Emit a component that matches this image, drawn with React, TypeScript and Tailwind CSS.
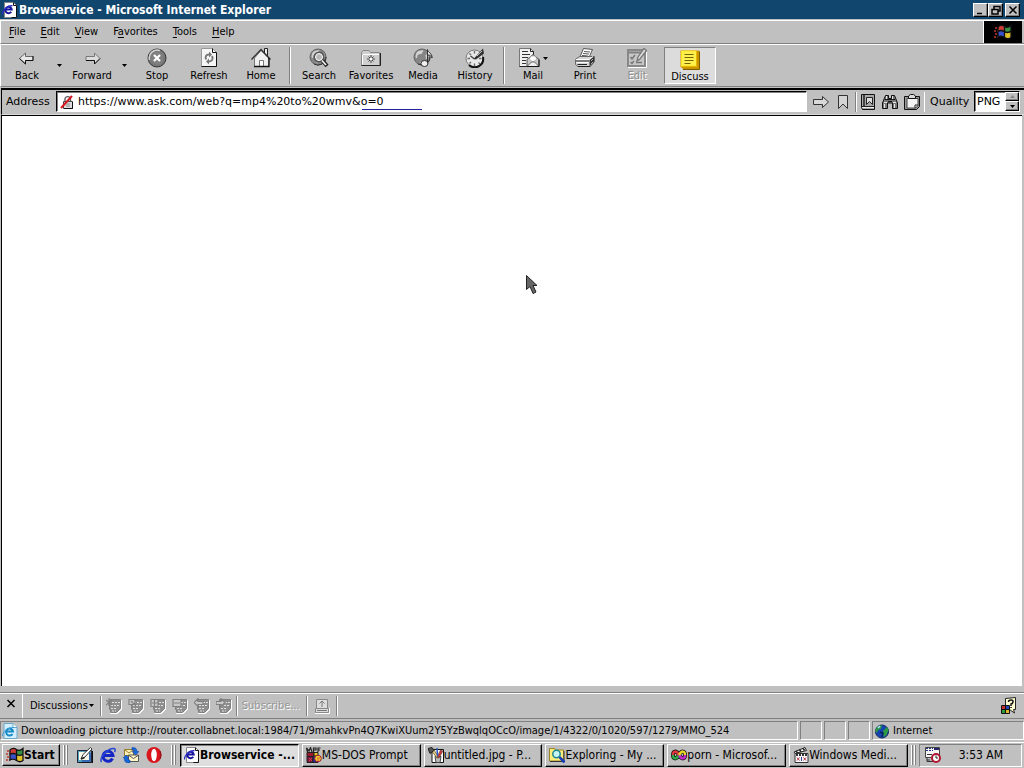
import type { ReactNode } from "react";

function Svg({ w = 16, h = 16, children }: { w?: number; h?: number; children: ReactNode }) {
  return (
    <svg width={w} height={h} viewBox={`0 0 ${w} ${h}`} className="shrink-0" aria-hidden="true">
      {children}
    </svg>
  );
}

/* ---------- icons ---------- */

const IePage = () => (
  <Svg>
    <path d="M2.500.5h9l3 3v12h-12z" fill="#fff" stroke="#888" />
    <path d="M11.500.5v3h3v12h-5" fill="none" stroke="#111" />
    <path d="M9.200 9.800A3.200 3.200 0 1 1 9.700 7.500H4" fill="none" stroke="#15159c" strokeWidth="2" />
    <path d="M.5 12.500C0 9 5 3.500 10.500 3.500" fill="none" stroke="#2929c8" strokeWidth="1.300" />
  </Svg>
);

const BackIcon = () => (
  <Svg w={20} h={20}>
    <path d="M2.500 10.500 8.500 5v3.500h7.500v4H8.500V16z" fill="#e8e8e8" stroke="#666" />
    <path d="m2.500 10.500 6 5.500v-3.500h7.500V8" fill="none" stroke="#111" />
  </Svg>
);

const ForwardIcon = () => (
  <Svg w={20} h={20}>
    <path d="M18 10.500 12.500 5v3.500H4v4h8.500V16z" fill="#dcdcdc" stroke="#777" />
    <path d="M4 12.500h8.500V16l5.500-5.500" fill="none" stroke="#111" />
  </Svg>
);

const StopIcon = () => (
  <Svg w={20} h={20}>
    <circle cx="10" cy="10" r="9" fill="#777" stroke="#333" />
    <path d="M2.500 12A8 8 0 0 1 13 2.500" fill="none" stroke="#d4d4d4" strokeWidth="1.500" />
    <circle cx="10" cy="10" r="6.500" fill="#808080" />
    <path d="m7 7 6 6m0-6-6 6" stroke="#fff" strokeWidth="2.200" />
  </Svg>
);

const RefreshIcon = () => (
  <Svg w={20} h={20}>
    <path d="M2.500.5h11l4 4v14h-15z" fill="#f6f6f6" stroke="#999" />
    <path d="M13.500.5v4h4v14h-15" fill="none" stroke="#111" />
    <path d="M7 11.500c-1-3 0-5 3-5M13 8c1.500 3 0 5.500-3 5.500" fill="none" stroke="#777" strokeWidth="2" />
    <path d="m10 3.500 3 3-3 3zM10 10.500l-3 3 3 3z" fill="#777" />
  </Svg>
);

const HomeIcon = () => (
  <Svg w={20} h={20}>
    <path d="M13.500 6V.5h3V9" fill="#eee" stroke="#222" />
    <path d="M3.500 10v8.500h14V10L10 2.500z" fill="#f0f0f0" stroke="#777" />
    <path d="m.5 11.500 9.500-10 9.500 10" fill="none" stroke="#333" strokeWidth="1.300" />
    <path d="M8.500 18.500v-6h4v6" fill="#fff" stroke="#777" />
    <path d="M3 18.500h15V10" fill="none" stroke="#111" strokeWidth="1.300" />
  </Svg>
);

const Globe = () => (
  <>
    <circle cx="9" cy="9" r="8" fill="#858585" stroke="#666" />
    <path d="M3 5c2-3 5-3 8-3L9 6 5 7l-1 4-2-2zM12 7l3-2 1 4-3 3zM5 13l4 1v2z" fill="#d4d4d4" stroke="#777" strokeWidth=".5" />
    <path d="M17 9a8 8 0 0 1-12 7" fill="none" stroke="#333" />
  </>
);

const SearchIcon = () => (
  <Svg w={20} h={20}>
    <Globe />
    <circle cx="10" cy="9" r="4.500" fill="#b8b8b8" stroke="#555" strokeWidth="2" />
    <circle cx="10" cy="9" r="3.500" fill="none" stroke="#fff" />
    <path d="m13.500 12.500 4.500 5.500" stroke="#222" strokeWidth="4" />
    <path d="m13 12.500 4 4.500" stroke="#eee" strokeWidth="1.800" />
  </Svg>
);

const FavoritesIcon = () => (
  <Svg w={20} h={20}>
    <path d="M.5 4.500 2 2.500h6l1.500 2h9v13H.5z" fill="#cfcfcf" stroke="#888" />
    <path d="M2 6.500h16M1.500 16.500V7" stroke="#fff" />
    <path d="M.5 17.500h19V5" fill="none" stroke="#222" />
    <path d="M10 7v8M6 11h8M7.500 8.500l5 5m0-5-5 5" stroke="#333" strokeWidth=".9" />
    <circle cx="10" cy="11" r="1.300" fill="#fff" />
  </Svg>
);

const MediaIcon = () => (
  <Svg w={20} h={20}>
    <Globe />
    <ellipse cx="11.500" cy="15.500" rx="3.500" ry="3" fill="#f0f0f0" stroke="#333" />
    <path d="M14.500 15.500V1.500c0 3 5 3.500 4.500 8.500-.5-2-2-3-4-3" fill="#eee" stroke="#333" />
  </Svg>
);

const HistoryIcon = () => (
  <Svg w={20} h={20}>
    <circle cx="9.500" cy="10.500" r="8.500" fill="#e8e8e8" stroke="#777" />
    <path d="M18 9a8.500 8.500 0 0 1-14 8" fill="none" stroke="#111" strokeWidth="2" />
    <path d="M9.500 3v2.500m0 10V18M2.500 10.500H5m9 0h2.500M4.500 5.500l1.500 1.500m7.500 7.500 1.500 1.500M4.500 15.500 6 14" stroke="#666" strokeWidth="1.300" />
    <path d="M8.500 11 18 .5l1 5-8 6z" fill="#333" />
    <path d="m12 8 5-5" stroke="#bbb" />
    <path d="m9.500 11-4-3" stroke="#444" strokeWidth="1.500" />
  </Svg>
);

const MailIcon = () => (
  <Svg w={22} h={20}>
    <path d="M1.500.5h11l3 3v15h-14z" fill="#f0f0f0" stroke="#777" />
    <path d="M12.500.5v3h3v5M1.500 18.500h9" fill="none" stroke="#222" />
    <path d="M4 3.500h6M4 6.500h8M4 9.500h6M4 12.500h4M4 15.500h4" stroke="#333" />
    <path d="m9 11.500 6-5 6 5v7H9z" fill="#c8c8c8" stroke="#555" />
    <path d="m11 11 2-3h4l2 3-4 3z" fill="#fff" stroke="#999" strokeWidth=".6" />
    <path d="m9.500 18 4-4h3l4 4" fill="#eee" stroke="#666" />
    <path d="M9 18.500h12v-7" fill="none" stroke="#111" />
  </Svg>
);

const PrintIcon = () => (
  <Svg w={20} h={20}>
    <path d="m5 9 3.500-8.500 9 1L14 9.500z" fill="#fff" stroke="#555" />
    <path d="m9 3.500 6 .5M8 5.500l6 .5M7 7.500l6 .5" stroke="#555" />
    <path d="m.5 11.500 4-3h15v5l-4 5H3l-2.500-2z" fill="#d4d4d4" stroke="#666" />
    <path d="M1 11.500h13l4-3M1.500 14.500h12" fill="none" stroke="#fff" />
    <path d="M14.500 12 19 8.500V14l-4.500 4.500z" fill="#333" />
    <path d="m16 13 2-2m-2 5 2-2" stroke="#aaa" />
    <path d="M1 13h13M2.500 16.500H12M3 18.500h12" fill="none" stroke="#222" />
  </Svg>
);

const EditIcon = () => (
  <Svg w={20} h={20}>
    <path d="M1 2h17v16H1z" fill="#c7c7c7" stroke="#888" strokeWidth="2" />
    <path d="M1 4.500h17" stroke="#808080" strokeWidth="2" />
    <path d="m3.500 9 1.500 2 3-4M3.500 14l1.500 1.500 2-2.500M9 14.500h6" fill="none" stroke="#777" strokeWidth="1.500" />
    <path d="m10 13 1-4 6-8.500 2.500 2L13 11z" fill="#ddd" stroke="#777" strokeWidth="1.300" />
    <path d="M1 19.500h18.500V4" fill="none" stroke="#fff" />
  </Svg>
);

const DiscussIcon = () => (
  <Svg w={20} h={20}>
    <path d="M.5.500h19v19H3.500l-3-3z" fill="#c99400" />
    <path d="M1.500 1h15v15h-15z" fill="#fff04d" stroke="#ffe11f" />
    <path d="M.5 16.500h16V1" fill="none" stroke="#e8b800" />
    <path d="M3 19.500h16.500V1.500" fill="none" stroke="#7d5c00" />
    <path d="M4.500 4.500h9M4.500 7.500h9M4.500 10.500h9M4.500 13.500h6" stroke="#6f6400" strokeWidth="1.200" />
  </Svg>
);

const LockIcon = () => (
  <Svg>
    <path d="M6 7.500V4.500a3 3 0 0 1 5.500 0v3" fill="none" stroke="#555" strokeWidth="1.300" />
    <path d="M4.500 7.500h9v7h-9z" fill="#ddd" stroke="#444" />
    <path d="M5 14.500h8.500V8" fill="none" stroke="#111" />
    <path d="M7 10h4M7 12h4" stroke="#888" />
    <path d="M2 14 13 2" stroke="#d8141e" strokeWidth="2" />
  </Svg>
);

const GoIcon = () => (
  <Svg>
    <path d="M.5 5.500h9v-3l6 5.500-6 5.500v-3h-9z" fill="#d8d8d8" stroke="#333" />
  </Svg>
);

const BookmarkIcon = () => (
  <Svg>
    <path d="M3.500 1.500h9v13L8 10l-4.500 4.500z" fill="#d4d4d4" stroke="#333" />
  </Svg>
);

const BookIcon = () => (
  <Svg>
    <path d="M1.500.5h13v15h-12l-1-2z" fill="#a8a8a8" stroke="#111" />
    <path d="M4 1v12" stroke="#222" strokeWidth="1.500" />
    <path d="M2 13.500h12" stroke="#eee" />
    <path d="M2 12.500h12" stroke="#222" />
    <path d="M6.500 3.500h6v7l-3-3-3 3z" fill="#ddd" stroke="#222" />
  </Svg>
);

const BinocularsIcon = () => (
  <Svg>
    <path d="M3.500 1.500h3v3h3v-3h3L15.500 9v5.500h-5V9h-5v5.500h-5V9z" fill="#777" stroke="#111" />
    <path d="M2 8.500h3m6 0h3M4.500 2v4m6-4v4M2.500 10v4m10-4v4" stroke="#e8e8e8" />
    <path d="M3 5.500h10M6 7.500h4" stroke="#111" />
  </Svg>
);

const ClipboardIcon = () => (
  <Svg>
    <path d="M.5 2.500h15v10l-3 3H.5z" fill="#999" stroke="#111" />
    <path d="M3 4.500h11v7l-2.500 2.500H3z" fill="#f4f4f4" stroke="#444" />
    <path d="M4.500 4.500V2l2-1.500h3l2 1.500v2.500z" fill="#ddd" stroke="#111" />
    <path d="M11 14v-3h3" fill="none" stroke="#222" />
  </Svg>
);

const WinFlag = () => (
  <Svg w={18} h={16}>
    <path d="M1 4h3M0 7h4M1 10h3M0 13h4" stroke="#c03a30" strokeWidth="1.500" strokeDasharray="2 1" />
    <path d="M4 3q3-3 6-1v5q-3-2-6 0z" fill="#d03c38" />
    <path d="M11 2.500q3 2 6-1v5q-3 3-6 1z" fill="#369045" />
    <path d="M4 8q3-2 6 0v5q-3-2-6 0z" fill="#3750cb" />
    <path d="M11 8.500q3 2 6-1v6q-3 2-6 0z" fill="#e0c22d" />
    <path d="M4 13V3q3-3 6.500-.5 3 2 6.500-1v12q-3 2.500-6.500 0Q7 11 4 13zM10.500 2.500v11M4 7.500q3-2 6.500 0t6.500-.5" fill="none" stroke="#111" strokeWidth="1.300" />
  </Svg>
);

const SmallE = () => (
  <Svg>
    <path d="M2 .5h9l4 4v11H2z" fill="#d5efff" stroke="#6ba8c8" />
    <path d="M11 .5v4h4" fill="#fff" stroke="#6ba8c8" />
    <path d="M10.500 11A3.500 3.500 0 1 1 11 8.500H4" fill="none" stroke="#168bc6" strokeWidth="2" />
    <path d="M.5 13C0 9 6 4 12 4.500" fill="none" stroke="#3aa0d8" />
  </Svg>
);

const DesktopIcon = () => (
  <Svg>
    <path d="M.5 3.500h14v12H.5z" fill="#55a3c4" stroke="#223" />
    <path d="M2 5h10v8H2z" fill="#f8f8e8" />
    <path d="m4 12 2-4.500 7.500-7L15 2 8 10z" fill="#fff" stroke="#333" />
    <path d="m4 12 3.500-1.500" stroke="#222" strokeWidth="1.500" />
    <path d="M5 14h8V6" fill="none" stroke="#2b57ad" strokeWidth="1.500" />
    <path d="M15.500 4v12H2" fill="none" stroke="#111" />
  </Svg>
);

const IeIcon = () => (
  <Svg>
    <path d="M12.500 11.500A5 5 0 1 1 13 8.500H4" fill="none" stroke="#1427c4" strokeWidth="3" />
    <path d="M1.500 15C-1 11 8 1 14 1.500c1.500.2 1.500 2 .5 3.500" fill="none" stroke="#2545d4" strokeWidth="1.500" />
  </Svg>
);

const OutlookIcon = () => (
  <Svg>
    <path d="M1.500 2.500h9v6h-9z" fill="#fff3b8" stroke="#9a7a28" />
    <path d="m2 3 4 3 4-3" fill="none" stroke="#9a7a28" />
    <path d="M5.500 8h10v6.500h-10z" fill="#fff6c8" stroke="#555" />
    <path d="m6 8.500 4.500 3 4.500-3" fill="none" stroke="#555" />
    <path d="M9 .5c4 0 5 1.500 5 4h2L12.500 8 9 4.500h2.500c0-1-1-1.500-2.500-1.500zM7 16c-5 0-6-2-5.500-5H0l3-3 3 3H4.500c0 1.500 1 2 2.500 2z" fill="#1668d8" stroke="#1240a0" strokeWidth=".5" />
  </Svg>
);

const OperaIcon = () => (
  <Svg>
    <ellipse cx="8" cy="8" rx="7.500" ry="8" fill="#d8161c" />
    <ellipse cx="8" cy="8" rx="2.800" ry="6.200" fill="#fff" />
    <path d="M14 4q2 4 0 8" fill="none" stroke="#881014" />
  </Svg>
);

const DosIcon = () => (
  <Svg>
    <path d="m1.500 5-1-4 2.500 3L4.500.5 6 5M7.500 5V1h2.500v2H8m4 2V1h2.500m-2.500 2h2" fill="none" stroke="#222" strokeWidth="1.200" />
    <path d="M1 5.500h7v4H1z" fill="#a0182e" stroke="#222" />
    <path d="M8 5.500h4v4H8z" fill="#e8c620" stroke="#222" />
    <path d="M1 9.500h6v6H1z" fill="#7c1440" stroke="#222" />
    <path d="M7 9h5v6.500H7z" fill="#2830a0" stroke="#222" />
    <circle cx="12" cy="11.500" r="3.300" fill="#efd62a" stroke="#a01830" />
    <path d="m3 11 3 3m0-3-3 3M11 11h3m-3 2h2" stroke="#e04048" />
  </Svg>
);

const PaintIcon = () => (
  <Svg>
    <path d="M4 2.500h11.500v13H4z" fill="#fff" stroke="#111" />
    <path d="M7 9.500h6l-1 6H8z" fill="#bbb" stroke="#444" />
    <path d="m9 11-6-8 2-1.500 6 9z" fill="#ecd488" stroke="#5c3c10" strokeWidth=".7" />
    <path d="m9 10 3.500-7L15 4l-4 7z" fill="#cf3838" stroke="#333" strokeWidth=".5" />
    <path d="m0 1.500 4-1 2 3-4 3z" fill="#555" stroke="#222" />
    <path d="m9 1 .5 8" stroke="#2855c0" strokeWidth="1.500" />
  </Svg>
);

const ExploreIcon = () => (
  <Svg>
    <path d="M.5 1.500h5l1 1.500h8v11H.5z" fill="#ffed7e" stroke="#9a8428" />
    <path d="M1 14.500h14V4" fill="none" stroke="#333" />
    <circle cx="7.500" cy="7" r="3.700" fill="#c4f4f4" stroke="#1f888c" strokeWidth="1.500" />
    <path d="m10.500 10 5 5.500" stroke="#143cba" strokeWidth="2.600" />
  </Svg>
);

const MsnIcon = () => (
  <Svg>
    <path d="M8 8C5 3 2 4 2 8s3 5 6 0 6-4 6 0-3 5-6 0" fill="none" stroke="#111" strokeWidth="4" />
    <path d="M2 8c0 4 3 5 6 0" fill="none" stroke="#2ba845" strokeWidth="2.500" />
    <path d="M2 8c0-4 3-5 6 0" fill="none" stroke="#e3333c" strokeWidth="2.500" />
    <path d="M8 8c3 5 6 4 6 0" fill="none" stroke="#c42acb" strokeWidth="2.500" />
    <path d="M8 8c3-5 6-4 6 0" fill="none" stroke="#e8d629" strokeWidth="2.500" />
  </Svg>
);

const MediaPlayerIcon = () => (
  <Svg>
    <path d="m1 5 11-4.500 1.500 3L2 6.500z" fill="#fff" stroke="#222" />
    <path d="m3 4 1.500 2m2-3.500L8 5m2-3.500 1.500 2" stroke="#222" strokeWidth="1.500" />
    <path d="M2 6.500h13v9H2z" fill="#f8f8f8" stroke="#333" />
    <path d="M3 8h11" stroke="#333" strokeWidth="2" strokeDasharray="2 1" />
    <path d="m4 10.500 2.500 3m0-3-2.500 3m6.500-3 2.500 3m0-3-2.500 3" stroke="#b83040" />
    <path d="M8.500 10v4" stroke="#2846a0" />
  </Svg>
);

const EarthIcon = () => (
  <Svg>
    <circle cx="8" cy="8.500" r="6.500" fill="#1544b2" stroke="#10285c" />
    <path d="m3 4 5-2-1 4-3 1-1 3-2-2zM9 8l4-4 1.500 3-2 5-3 2z" fill="#2c9a42" />
    <path d="m6 9 3 1-1 4" fill="none" stroke="#0c1f5c" strokeWidth="1.500" />
    <path d="m4 5 2-2" stroke="#b8e8ff" strokeWidth="1.500" />
  </Svg>
);

const TrayIcon = () => (
  <Svg w={18} h={18}>
    <path d="M1.500 1.500h14v10h-14z" fill="#f4f4f4" stroke="#444" />
    <path d="M2 2.500h7M2 4.500h7" stroke="#2a3080" strokeDasharray="2 1" />
    <path d="M10 2h5v2h-5z" fill="#24246c" />
    <path d="M3 8.500h5M3 11.500v4h6M3 14h3" fill="none" stroke="#333" />
    <circle cx="12" cy="12" r="4" fill="#fff" stroke="#ad1830" strokeWidth="2" />
    <path d="M12 9.500V12h2" fill="none" stroke="#222" />
  </Svg>
);

const HelpIcon = () => (
  <Svg w={18} h={18}>
    <path d="m5.500 1.500 10-1v12h-2l1 3.500-5-3.500h-4z" fill="#ffffd2" stroke="#222" />
    <path d="M8.500 5q0-2 2.500-2t2 2-2 2v2m0 1v1" fill="none" stroke="#111" strokeWidth="1.500" />
    <path d="M1.500 8.500h8v8h-8z" fill="#fff" stroke="#111" />
    <path d="M2 9h3v3H2z" fill="#c72c2c" />
    <path d="M6 9h3v3H6z" fill="#2643b4" />
    <path d="M2 13h3v3H2z" fill="#28973e" />
    <path d="M6 13h3v3H6z" fill="#deb62a" />
    <path d="M5.500 8v9M1 12.500h9" stroke="#111" />
  </Svg>
);

const noteMarks = [
  "m0 2 6 5m0-5-6 5M3 0v8",
  "M1 1.500h6v5H1zM3 3l5 5",
  "M1 1.500h7v7H1zM4.500 2v6M2 5h6",
  "M1 1.500h8v7H1zM2 5h6",
  "m0 4.500 4-4v3h5v3H4v2z",
  "m9 4.500-4-4v3H0v3h5v2z",
];

const NoteIcon = ({ mark }: { mark: string }) => (
  <Svg>
    <path d="M4.500 2.500h11v9l-4 4h-7v-3z" fill="#f0f0f0" stroke="#fff" />
    <path d="M3.500 1.500h11v9l-4 4h-6v-3h-1z" fill="#8e8e8e" stroke="#808080" />
    <path d="M6 4.500h8M5 7.500h8M5 10.500h6M6 13h4" stroke="#e0e0e0" strokeDasharray="2 1" />
    <path d={mark} fill="#c8c8c8" stroke="#808080" strokeWidth="1.200" />
  </Svg>
);

const PaneIcon = () => (
  <Svg>
    <path d="M2.500 10V1.500h11V10M1.500 10.500h13v4h-13z" fill="#ddd" stroke="#888" />
    <path d="M8 9V3M5.500 5.500 8 3l2.500 2.500M3 12.500h10" fill="none" stroke="#777" />
    <path d="M1 15.500h14.500V10" fill="none" stroke="#fff" />
  </Svg>
);

const Caret = () => (
  <Svg w={5} h={3}>
    <path d="M0 0h5L2.500 3z" fill="#000" />
  </Svg>
);

/* ---------- pieces ---------- */

const Divider = () => <div className="mx-0.5 w-0.5 shrink-0 self-stretch border-l border-r border-l-[#808080] border-r-white" />;

const ShortDivider = () => <div className="h-5 w-0.5 shrink-0 border-l border-r border-l-[#808080] border-r-white" />;

const Grip = () => (
  <div className="flex shrink-0 gap-px self-stretch py-0.5">
    <div className="w-0.5 border-l border-r border-l-white border-r-[#808080]" />
    <div className="w-0.5 border-l border-r border-l-white border-r-[#808080]" />
  </div>
);

function ToolButton({ label, children }: { label: string; children: ReactNode }) {
  return (
    <button className="flex w-[52px] shrink-0 flex-col items-center gap-px">
      {children}
      <span>{label}</span>
    </button>
  );
}

function DropArrow({ label }: { label: string }) {
  return (
    <button aria-label={label} className="flex w-[13px] shrink-0 items-center justify-center self-stretch">
      <Caret />
    </button>
  );
}

function MenuItem({ before = "", hot, after }: { before?: string; hot: string; after: string }) {
  return (
    <button>
      {before}
      <span className="underline underline-offset-2">{hot}</span>
      {after}
    </button>
  );
}

const raised = "border border-b-black border-l-white border-r-black border-t-white shadow-[inset_-1px_-1px_0_#808080]";

function CaptionButton({ label, d }: { label: string; d: string }) {
  return (
    <button aria-label={label} className={`flex h-[14px] w-[15px] items-center justify-center bg-[#c0c0c0] ${raised}`}>
      <Svg w={10} h={10}>
        <path d={d} fill="none" stroke="#000" strokeWidth="1.500" />
      </Svg>
    </button>
  );
}

function Task({ label, children, active }: { label: string; children: ReactNode; active?: boolean }) {
  return (
    <button
      className={
        active
          ? "flex h-[23px] min-w-0 flex-1 items-center border border-b-white border-l-black border-r-white border-t-black bg-[#dedede] pl-[3px] text-left text-[12px] font-bold shadow-[inset_1px_1px_0_#808080]"
          : `flex h-[23px] min-w-0 flex-1 items-center pl-[3px] text-left text-[12px] ${raised}`
      }
    >
      {children}
      <span className="whitespace-nowrap">{label}</span>
    </button>
  );
}

const StatusCell = ({ children, className }: { children?: ReactNode; className: string }) => (
  <div className={`flex h-[19px] items-center border border-b-white border-l-[#808080] border-r-white border-t-[#808080] ${className}`}>{children}</div>
);

export default function App() {
  return (
    <div className="flex min-h-screen w-full flex-col overflow-hidden bg-[#c0c0c0] font-['DejaVu_Sans_Condensed','DejaVu_Sans',sans-serif] text-[11px] leading-[14px] text-black">
      <header className="flex h-[19px] items-center bg-[#11476f] pl-0.5 pr-1 text-white">
        <IePage />
        <h1 className="flex-1 pl-px text-[12px] font-bold">Browservice - Microsoft Internet Explorer</h1>
        <CaptionButton label="Minimize" d="M1 8.500h5" />
        <CaptionButton label="Restore" d="M3 4V1.500h6V6H7M1 4.500h6V9H1z" />
        <div className="ml-0.5 flex">
          <CaptionButton label="Close" d="m1.500 1.500 7 7m0-7-7 7" />
        </div>
      </header>

      <nav className="mt-px flex h-6 items-stretch border-b border-l border-t border-b-[#808080] border-l-white border-t-white pr-0.5">
        <div className="flex flex-1 items-center gap-[15px] pl-2">
          <MenuItem hot="F" after="ile" />
          <MenuItem hot="E" after="dit" />
          <MenuItem hot="V" after="iew" />
          <MenuItem before="F" hot="a" after="vorites" />
          <MenuItem hot="T" after="ools" />
          <MenuItem hot="H" after="elp" />
        </div>
        <div className="flex w-[39px] items-center justify-center border-l border-white bg-black">
          <WinFlag />
        </div>
      </nav>

      <div role="toolbar" aria-label="Standard buttons" className="flex h-[43px] items-center border-b border-l border-t border-b-[#808080] border-l-white border-t-white py-0.5">
        <ToolButton label="Back"><BackIcon /></ToolButton>
        <DropArrow label="Back history" />
        <ToolButton label="Forward"><ForwardIcon /></ToolButton>
        <DropArrow label="Forward history" />
        <ToolButton label="Stop"><StopIcon /></ToolButton>
        <ToolButton label="Refresh"><RefreshIcon /></ToolButton>
        <ToolButton label="Home"><HomeIcon /></ToolButton>
        <Divider />
        <ToolButton label="Search"><SearchIcon /></ToolButton>
        <ToolButton label="Favorites"><FavoritesIcon /></ToolButton>
        <ToolButton label="Media"><MediaIcon /></ToolButton>
        <ToolButton label="History"><HistoryIcon /></ToolButton>
        <Divider />
        <button className="flex w-[52px] shrink-0 flex-col items-center gap-px">
          <span className="flex items-center gap-[3px]">
            <MailIcon />
            <Caret />
          </span>
          <span>Mail</span>
        </button>
        <ToolButton label="Print"><PrintIcon /></ToolButton>
        <button disabled className="flex w-[52px] shrink-0 flex-col items-center gap-px text-[#909090] [text-shadow:1px_1px_0_white]">
          <EditIcon />
          <span>Edit</span>
        </button>
        <button className="ml-px flex w-[52px] shrink-0 flex-col items-center self-stretch border border-b-white border-l-[#808080] border-r-white border-t-[#808080] bg-[#dcdcdc] pt-0.5">
          <DiscussIcon />
          <span>Discuss</span>
        </button>
      </div>

      <form className="ml-px mt-px flex h-[27px] items-center border-b border-l border-t-2 border-b-[#dadada] border-l-black border-t-black pb-px pl-1 pr-1 font-['DejaVu_Sans',sans-serif]" onSubmit={(e) => e.preventDefault()}>
        <label htmlFor="address" className="w-[50px]">Address</label>
        <div className="relative flex h-[21px] min-w-0 flex-1 items-center border border-b-white border-l-black border-r-white border-t-black bg-white pl-0.5 shadow-[inset_1px_1px_0_#808080]">
          <LockIcon />
          <input id="address" defaultValue="https://www.ask.com/web?q=mp4%20to%20wmv&o=0" className="ml-[3px] min-w-0 flex-1 bg-transparent outline-none" />
          <div className="absolute bottom-px left-[305px] h-px w-[60px] bg-[#2020a0]" />
        </div>
        <div className="flex gap-1.5 pl-1.5 pr-1">
          <button aria-label="Go"><GoIcon /></button>
          <button aria-label="Bookmark page"><BookmarkIcon /></button>
        </div>
        <ShortDivider />
        <div className="flex gap-1.5 pl-[3px] pr-1">
          <button aria-label="Bookmarks"><BookIcon /></button>
          <button aria-label="Find"><BinocularsIcon /></button>
          <button aria-label="Clipboard"><ClipboardIcon /></button>
        </div>
        <div className="h-5 w-px bg-white" />
        <label htmlFor="quality" className="w-[49px] pl-[5px]">Quality</label>
        <div className="flex h-[21px] w-[46px] items-center border border-b-white border-l-black border-r-white border-t-black bg-white shadow-[inset_1px_1px_0_#808080]">
          <select id="quality" className="w-[30px] appearance-none bg-transparent pl-0.5 outline-none">
            <option>PNG</option>
          </select>
          <div className="flex w-[14px] flex-col">
            <button type="button" aria-label="Higher quality" className={`flex h-[9px] items-center justify-center bg-[#c0c0c0] ${raised}`}>
              <svg width="5" height="3" viewBox="0 0 5 3"><path d="M0 3h5L2.500 0z" fill="#888" /></svg>
            </button>
            <button type="button" aria-label="Lower quality" className={`flex h-[10px] items-center justify-center bg-[#c0c0c0] ${raised}`}>
              <Caret />
            </button>
          </div>
        </div>
      </form>

      <main className="relative ml-px mr-0.5 flex-1 border-l border-t border-black bg-white">
        <svg width="12" height="20" viewBox="0 0 12 20" className="absolute left-[524px] top-[159px]" aria-hidden="true">
          <path d="M.5.5v14L4 11.500l3 7 3-1.500-3-6.500h4z" fill="#666" stroke="#222" />
        </svg>
      </main>

      <section aria-label="Discussions" className="mt-1.5 flex h-[27px] items-center border-b border-t border-b-[#808080] border-t-[#808080] pr-1.5 shadow-[inset_0_1px_0_white]">
        <button aria-label="Close discussions" className="flex w-[22px] justify-center self-stretch pt-1.5">
          <Svg w={10} h={10}><path d="m1.500 1 7 7m0-7-7 7" stroke="#000" strokeWidth="1.500" /></Svg>
        </button>
        <div className="w-px self-stretch bg-white" />
        <button className="flex items-center gap-px pl-[7px] pr-1.5">
          Discussions
          <Caret />
        </button>
        <ShortDivider />
        <div className="flex gap-1.5 px-1">
          {noteMarks.map((mark, i) => (
            <button key={i} disabled aria-label={`Discussion action ${i + 1}`}><NoteIcon mark={mark} /></button>
          ))}
        </div>
        <ShortDivider />
        <button disabled className="w-[68px] pl-1 text-left text-[#969696] [text-shadow:1px_1px_0_white]">Subscribe...</button>
        <ShortDivider />
        <button disabled aria-label="Show pane" className="px-1.5"><PaneIcon /></button>
        <ShortDivider />
        <div className="flex-1" />
        <button aria-label="Help"><HelpIcon /></button>
      </section>

      <div className="flex gap-0.5 py-0.5" role="status">
        <StatusCell className="min-w-0 flex-1 gap-[3px] overflow-hidden pl-px">
          <SmallE />
          <span className="whitespace-nowrap">Downloading picture http://router.collabnet.local:1984/71/9mahkvPn4Q7KwiXUum2Y5YzBwqlqOCcO/image/1/4322/0/1020/597/1279/MMO_524</span>
        </StatusCell>
        <StatusCell className="w-[22px]" />
        <StatusCell className="w-[22px]" />
        <StatusCell className="w-[22px]" />
        <StatusCell className="w-[152px] gap-[3px] pl-px">
          <EarthIcon />
          <span>Internet</span>
        </StatusCell>
      </div>

      <footer className="flex h-[26px] items-center gap-[3px] border-t border-white pb-px pl-0.5 pr-0.5">
        <button className={`flex h-[22px] w-[58px] shrink-0 items-center pl-[3px] text-[12px] font-bold ${raised}`}>
          <WinFlag />
          Start
        </button>
        <Grip />
        <div className="mr-1.5 flex gap-[7px] pl-1.5">
          <button aria-label="Show desktop"><DesktopIcon /></button>
          <button aria-label="Internet Explorer"><IeIcon /></button>
          <button aria-label="Outlook Express"><OutlookIcon /></button>
          <button aria-label="Opera"><OperaIcon /></button>
        </div>
        <Grip />
        <div className="flex min-w-0 flex-1 gap-[3px] pl-px">
          <Task label="Browservice -..." active><IePage /></Task>
          <Task label="MS-DOS Prompt"><DosIcon /></Task>
          <Task label="untitled.jpg - P..."><PaintIcon /></Task>
          <Task label="Exploring - My ..."><ExploreIcon /></Task>
          <Task label="porn - Microsof..."><MsnIcon /></Task>
          <Task label="Windows Medi..."><MediaPlayerIcon /></Task>
        </div>
        <Grip />
        <div className="flex h-[23px] w-[103px] shrink-0 items-center justify-between border border-b-white border-l-[#808080] border-r-white border-t-[#808080] pl-1 pr-[18px] text-[12px]">
          <TrayIcon />
          <time>3:53 AM</time>
        </div>
      </footer>
    </div>
  );
}
